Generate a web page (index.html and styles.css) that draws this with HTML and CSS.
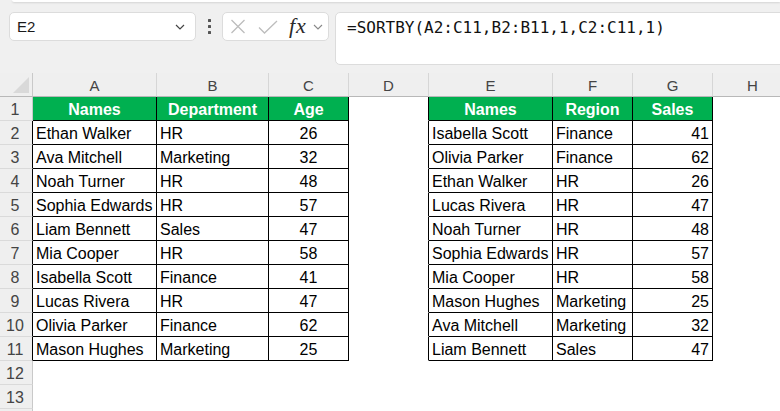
FILE: index.html
```html
<!DOCTYPE html>
<html>
<head>
<meta charset="utf-8">
<link rel="stylesheet" href="styles.css">
</head>
<body>
<div class="ribbon-edge"></div>
<div class="toolbar">
  <div class="namebox">
    <span class="nb-text">E2</span>
    <svg class="nb-chev" width="10" height="6" viewBox="0 0 10 6"><path d="M1 1 L5 5 L9 1" fill="none" stroke="#444" stroke-width="1.2"/></svg>
  </div>
  <div class="kebab"><i></i><i></i><i></i></div>
  <div class="fxbox">
    <svg class="ic-x" width="16" height="15" viewBox="0 0 16 15"><path d="M1.5 1 L14.5 14 M14.5 1 L1.5 14" fill="none" stroke="#bdbdbd" stroke-width="1.3"/></svg>
    <svg class="ic-check" width="20" height="14" viewBox="0 0 20 14"><path d="M1 7.5 L6.5 13 L19 1" fill="none" stroke="#bdbdbd" stroke-width="1.3"/></svg>
    <span class="fx">fx</span>
    <svg class="fx-chev" width="10" height="6" viewBox="0 0 10 6"><path d="M1 1 L5 5 L9 1" fill="none" stroke="#888" stroke-width="1.1"/></svg>
  </div>
  <div class="formula">=SORTBY(A2:C11,B2:B11,1,C2:C11,1)</div>
</div>
<div class="sheet">
  <div class="corner"><span class="tri"></span></div>
  <div class="ch">A</div><div class="ch">B</div><div class="ch">C</div><div class="ch">D</div><div class="ch">E</div><div class="ch">F</div><div class="ch">G</div><div class="ch">H</div>

  <div class="rh">1</div><div class="c t hd">Names</div><div class="c t hd">Department</div><div class="c t hd">Age</div><div class="c lb"></div><div class="c t hd">Names</div><div class="c t hd">Region</div><div class="c t hd">Sales</div><div class="c"></div>

  <div class="rh lb">2</div><div class="c t">Ethan Walker</div><div class="c t">HR</div><div class="c t ctr">26</div><div class="c lb"></div><div class="c t">Isabella Scott</div><div class="c t">Finance</div><div class="c t rt">41</div><div class="c"></div>

  <div class="rh lb">3</div><div class="c t">Ava Mitchell</div><div class="c t">Marketing</div><div class="c t ctr">32</div><div class="c lb"></div><div class="c t">Olivia Parker</div><div class="c t">Finance</div><div class="c t rt">62</div><div class="c"></div>

  <div class="rh lb">4</div><div class="c t">Noah Turner</div><div class="c t">HR</div><div class="c t ctr">48</div><div class="c lb"></div><div class="c t">Ethan Walker</div><div class="c t">HR</div><div class="c t rt">26</div><div class="c"></div>

  <div class="rh lb">5</div><div class="c t">Sophia Edwards</div><div class="c t">HR</div><div class="c t ctr">57</div><div class="c lb"></div><div class="c t">Lucas Rivera</div><div class="c t">HR</div><div class="c t rt">47</div><div class="c"></div>

  <div class="rh lb">6</div><div class="c t">Liam Bennett</div><div class="c t">Sales</div><div class="c t ctr">47</div><div class="c lb"></div><div class="c t">Noah Turner</div><div class="c t">HR</div><div class="c t rt">48</div><div class="c"></div>

  <div class="rh lb">7</div><div class="c t">Mia Cooper</div><div class="c t">HR</div><div class="c t ctr">58</div><div class="c lb"></div><div class="c t">Sophia Edwards</div><div class="c t">HR</div><div class="c t rt">57</div><div class="c"></div>

  <div class="rh lb">8</div><div class="c t">Isabella Scott</div><div class="c t">Finance</div><div class="c t ctr">41</div><div class="c lb"></div><div class="c t">Mia Cooper</div><div class="c t">HR</div><div class="c t rt">58</div><div class="c"></div>

  <div class="rh lb">9</div><div class="c t">Lucas Rivera</div><div class="c t">HR</div><div class="c t ctr">47</div><div class="c lb"></div><div class="c t">Mason Hughes</div><div class="c t">Marketing</div><div class="c t rt">25</div><div class="c"></div>

  <div class="rh lb">10</div><div class="c t">Olivia Parker</div><div class="c t">Finance</div><div class="c t ctr">62</div><div class="c lb"></div><div class="c t">Ava Mitchell</div><div class="c t">Marketing</div><div class="c t rt">32</div><div class="c"></div>

  <div class="rh lb">11</div><div class="c t">Mason Hughes</div><div class="c t">Marketing</div><div class="c t ctr">25</div><div class="c lb"></div><div class="c t">Liam Bennett</div><div class="c t">Sales</div><div class="c t rt">47</div><div class="c"></div>

  <div class="rh">12</div><div class="c"></div><div class="c"></div><div class="c"></div><div class="c"></div><div class="c"></div><div class="c"></div><div class="c"></div><div class="c"></div>

  <div class="rh">13</div><div class="c"></div><div class="c"></div><div class="c"></div><div class="c"></div><div class="c"></div><div class="c"></div><div class="c"></div><div class="c"></div>

  <div class="rh"></div><div class="c"></div><div class="c"></div><div class="c"></div><div class="c"></div><div class="c"></div><div class="c"></div><div class="c"></div><div class="c"></div>
</div>
</body>
</html>
```

FILE: styles.css
```css
html, body {
  margin: 0;
  padding: 0;
  width: 780px;
  height: 411px;
  overflow: hidden;
  background: #f0f0f0;
  font-family: "Liberation Sans", Arial, sans-serif;
}

.ribbon-edge {
  height: 2px;
  margin-left: 12px;
  background: #ffffff;
  border-bottom-left-radius: 6px;
  box-shadow: 0 1px 2px rgba(0, 0, 0, 0.12);
}

.toolbar {
  height: 71px;
  box-sizing: border-box;
  padding: 10px 0 0 9px;
  display: flex;
  align-items: flex-start;
}

.namebox {
  width: 187px;
  height: 29px;
  box-sizing: border-box;
  background: #fff;
  border: 1px solid #dcdcdc;
  border-radius: 5px;
  display: flex;
  align-items: center;
  justify-content: space-between;
  padding: 0 10px 0 7px;
}

.nb-text {
  font-size: 15px;
  color: #1a1a1a;
}

.kebab {
  width: 3px;
  height: 29px;
  margin-left: 12px;
  display: flex;
  flex-direction: column;
  justify-content: center;
  gap: 3px;
}

.kebab i {
  display: block;
  width: 3px;
  height: 3px;
  background: #555;
  border-radius: 0.5px;
}

.fxbox {
  width: 107px;
  height: 29px;
  box-sizing: border-box;
  margin-left: 11px;
  background: #fff;
  border: 1px solid #dcdcdc;
  border-radius: 5px;
  display: flex;
  align-items: center;
  padding-left: 7px;
}

.ic-check {
  margin-left: 12px;
}

.fx {
  margin-left: 11px;
  font-family: "Liberation Serif", "DejaVu Serif", serif;
  font-style: italic;
  font-size: 22px;
  letter-spacing: 1px;
  color: #2a2a2a;
  line-height: 22px;
  margin-top: -2px;
}

.fx-chev {
  margin-left: 6px;
}

.formula {
  flex: 1;
  height: 53px;
  box-sizing: border-box;
  margin-left: 6px;
  margin-right: -12px;
  background: #fff;
  border: 1px solid #dcdcdc;
  border-radius: 5px;
  padding: 5px 0 0 11px;
  font-family: "DejaVu Sans Mono", "Liberation Mono", monospace;
  font-size: 16px;
  line-height: 20px;
  color: #111;
}

.sheet {
  display: grid;
  grid-template-columns: 33px 124px 112px 80px 80px 124px 80px 80px 80px;
  grid-auto-rows: 24px;
  background: #fff;
}

.sheet > div {
  box-sizing: border-box;
  border-right: 1px solid #fff;
  border-bottom: 1px solid #fff;
  overflow: hidden;
  white-space: nowrap;
  font-size: 16px;
  line-height: 23px;
  padding-top: 1px;
  color: #000;
}

.sheet > .corner {
  background: #efefef;
  border-right-color: #c9c9c9;
  border-bottom-color: #b8b8b8;
  display: flex;
  align-items: flex-end;
  justify-content: flex-end;
  padding: 0 3px 3px 0;
}

.tri {
  display: block;
  width: 16px;
  height: 16px;
  background: #d9d9d9;
  clip-path: polygon(100% 0, 100% 100%, 0 100%);
}

.sheet > .ch {
  background: #efefef;
  border-right-color: #d6d6d6;
  border-bottom-color: #b8b8b8;
  text-align: center;
  font-size: 15px;
  color: #444;
  padding-top: 1px;
}

.sheet > .rh {
  background: #efefef;
  border-right-color: #c9c9c9;
  border-bottom-color: #dadada;
  text-align: center;
  padding-right: 2px;
  color: #444;
}

.sheet > .c {
  padding-left: 3px;
  padding-right: 3px;
}

.sheet > .t {
  border-right-color: #000;
  border-bottom-color: #000;
}

.sheet > .lb {
  border-right-color: #000;
}

.sheet > .hd {
  background: #00b050;
  color: #fff;
  font-weight: bold;
  text-align: center;
}

.ctr {
  text-align: center;
}

.rt {
  text-align: right;
}
```
